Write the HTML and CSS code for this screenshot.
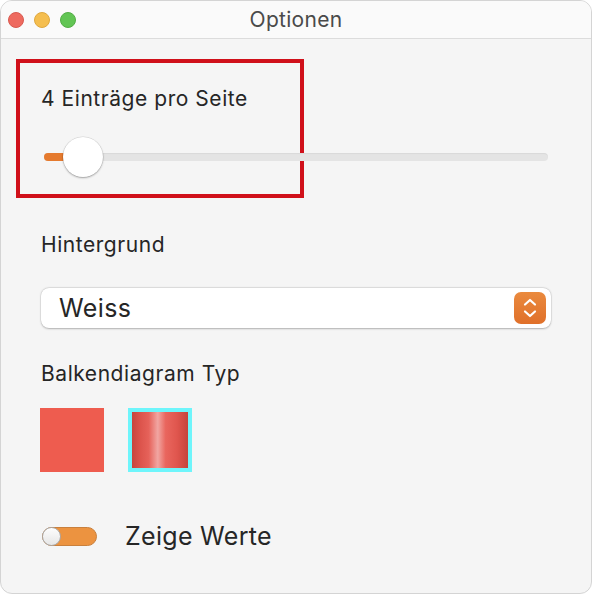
FILE: index.html
```html
<!DOCTYPE html>
<html>
<head>
<meta charset="utf-8">
<title>Optionen</title>
<link rel="stylesheet" href="styles.css">
</head>
<body>
<div class="window">
  <div class="titlebar">
    <div class="lights">
      <span class="light red"></span>
      <span class="light yellow"></span>
      <span class="light green"></span>
    </div>
    <div class="title">Optionen</div>
    <div></div>
  </div>

  <div class="content">
    <div class="section">
      <div class="highlight"></div>
      <div class="label">4 Einträge pro Seite</div>
      <div class="slider">
        <div class="track"><div class="fill"></div></div>
        <div class="knob"></div>
      </div>
    </div>

    <div class="label bg-label">Hintergrund</div>
    <div class="select">
      <span class="select-value">Weiss</span>
      <span class="stepper">
        <svg width="32" height="32" viewBox="0 0 32 32">
          <path d="M11 12.5 L16 8 L21 12.5" fill="none" stroke="#fff" stroke-width="2.2" stroke-linecap="round" stroke-linejoin="round"/>
          <path d="M11 19.5 L16 24 L21 19.5" fill="none" stroke="#fff" stroke-width="2.2" stroke-linecap="round" stroke-linejoin="round"/>
        </svg>
      </span>
    </div>

    <div class="label type-label">Balkendiagram Typ</div>
    <div class="swatches">
      <div class="swatch flat"></div>
      <div class="swatch glossy selected"><div class="glossy-inner"></div></div>
    </div>

    <div class="toggle-row">
      <div class="toggle"><div class="toggle-knob"></div></div>
      <span class="toggle-label">Zeige Werte</span>
    </div>
  </div>
</div>
</body>
</html>
```

FILE: styles.css
```css
body {
   margin: 0;
   background-color: white;
   font-family: Inter, "Liberation Sans", sans-serif;
   color: #262626;
}

.window {
   width: 592px;
   height: 594px;
   box-sizing: border-box;
   border: 1px solid #d4d4d4;
   border-radius: 12px;
   overflow: hidden;
   background-color: #f5f5f5;
}

.titlebar {
   height: 38px;
   box-sizing: border-box;
   border-bottom: 1px solid #dcdcdc;
   background-color: #fafafa;
   display: grid;
   grid-template-columns: 1fr auto 1fr;
   align-items: center;
}

.lights {
   display: flex;
   gap: 10px;
   padding-left: 7px;
}

.light {
   width: 16px;
   height: 16px;
   border-radius: 50%;
   box-sizing: border-box;
}

.red { background-color: #ee6a5f; border: 1px solid #d85a50; }
.yellow { background-color: #f5be4f; border: 1px solid #dea73e; }
.green { background-color: #62c554; border: 1px solid #53ad46; }

.title {
   font-size: 21px;
   letter-spacing: 0.3px;
   color: #4a4a4a;
}

.content {
   padding: 0 40px;
}

.section {
   position: relative;
   padding-top: 48px;
}

.highlight {
   position: absolute;
   left: -25px;
   top: 20px;
   width: 288px;
   height: 139px;
   box-sizing: border-box;
   border: 4px solid #d0101a;
}

.label {
   font-size: 21px;
   letter-spacing: 0.55px;
   line-height: 24px;
}

.slider {
   position: relative;
   height: 40px;
   margin-top: 26px;
   display: flex;
   align-items: center;
   padding: 0 3px;
}

.track {
   flex: 1;
   height: 8px;
   border-radius: 4px;
   background-color: #e4e4e4;
   box-shadow: inset 0 1px 1px rgba(0,0,0,0.05);
}

.fill {
   width: 30px;
   height: 8px;
   border-radius: 4px;
   background-color: #e57a2e;
}

.knob {
   position: absolute;
   left: 22px;
   top: 0;
   width: 40px;
   height: 40px;
   border-radius: 50%;
   background-color: #fff;
   box-shadow: 0 1px 2px rgba(0,0,0,0.3), 0 0 0 0.5px rgba(0,0,0,0.12);
}

.bg-label {
   margin-top: 55px;
   line-height: 25px;
}

.select {
   margin-top: 31px;
   height: 40px;
   border-radius: 8px;
   background-color: #fff;
   box-shadow: 0 0.5px 2px rgba(0,0,0,0.25), 0 0 0 0.5px rgba(0,0,0,0.08);
   display: flex;
   align-items: center;
   justify-content: space-between;
   padding: 0 5px 0 18px;
}

.select-value {
   font-size: 25px;
   letter-spacing: 0.4px;
}

.stepper {
   width: 32px;
   height: 32px;
   border-radius: 7px;
   background: linear-gradient(#ea8a3e, #e0702a);
   display: flex;
}

.type-label {
   margin-top: 33px;
   line-height: 25px;
}

.swatches {
   display: flex;
   gap: 24px;
   margin-top: 22px;
   margin-left: -1px;
}

.swatch {
   width: 64px;
   height: 64px;
   box-sizing: border-box;
}

.flat {
   background-color: #ee5c4f;
}

.selected {
   border: 4px solid #6ef5fb;
}

.glossy-inner {
   height: 100%;
   background: linear-gradient(90deg, #c8453d 0%, #dc544c 15%, #e6625a 30%, #f1a6a2 46%, #e9665e 60%, #e0564e 80%, #c6433b 100%);
}

.toggle-row {
   margin-top: 49px;
   display: flex;
   align-items: center;
   gap: 28px;
   height: 30px;
}

.toggle {
   width: 55px;
   height: 19px;
   box-sizing: border-box;
   margin-left: 1px;
   border-radius: 10px;
   background-color: #ec9340;
   border: 1px solid #c9803d;
   position: relative;
}

.toggle-knob {
   position: absolute;
   left: -1px;
   top: -1px;
   width: 19px;
   height: 19px;
   box-sizing: border-box;
   border-radius: 50%;
   background: linear-gradient(#fdfdfd, #e6e6e6);
   border: 1px solid #a9a9a9;
}

.toggle-label {
   font-size: 25px;
   letter-spacing: 0.3px;
   line-height: 30px;
}
```
